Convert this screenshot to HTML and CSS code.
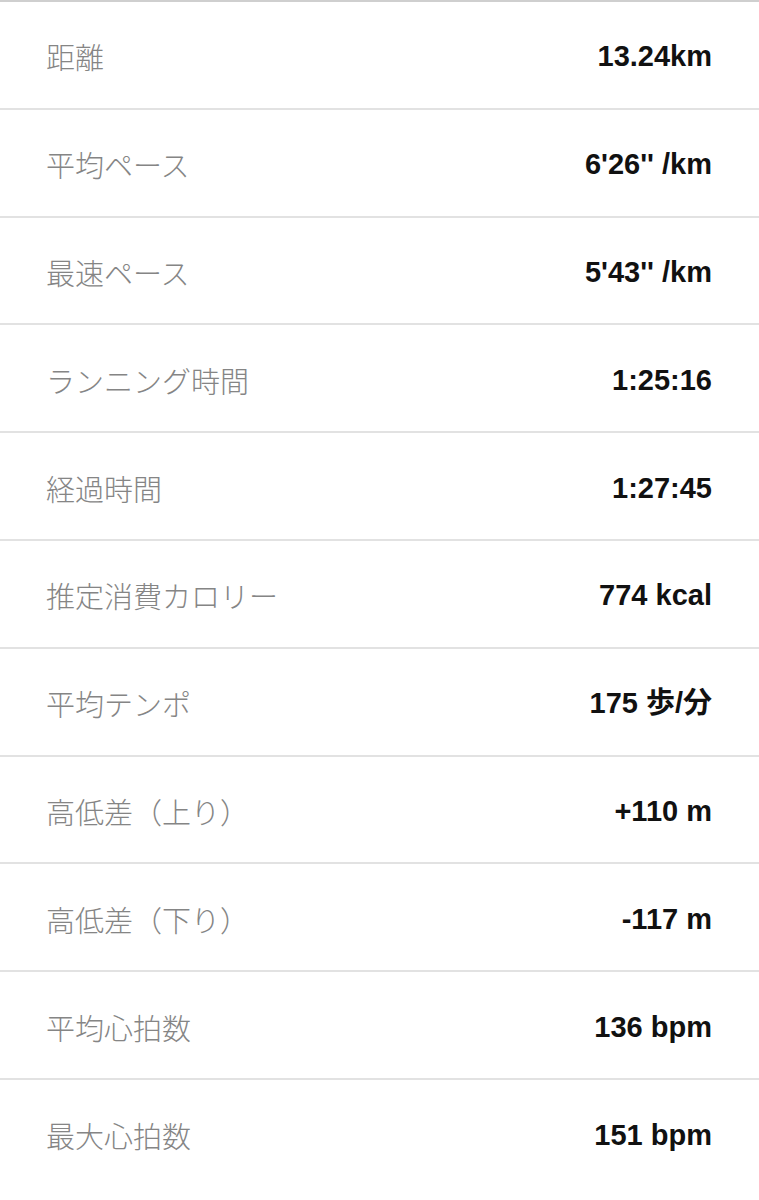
FILE: index.html
```html
<!DOCTYPE html>
<html lang="ja">
<head>
<meta charset="utf-8">
<link rel="stylesheet" href="styles.css">
</head>
<body>
<div class="list">
  <div class="row"><span class="label">距離</span><span class="value">13.24km</span></div>
  <div class="row"><span class="label">平均ペース</span><span class="value">6'26'' /km</span></div>
  <div class="row"><span class="label">最速ペース</span><span class="value">5'43'' /km</span></div>
  <div class="row"><span class="label">ランニング時間</span><span class="value">1:25:16</span></div>
  <div class="row"><span class="label">経過時間</span><span class="value">1:27:45</span></div>
  <div class="row"><span class="label">推定消費カロリー</span><span class="value">774 kcal</span></div>
  <div class="row"><span class="label">平均テンポ</span><span class="value">175 歩/分</span></div>
  <div class="row"><span class="label">高低差（上り）</span><span class="value">+110 m</span></div>
  <div class="row"><span class="label">高低差（下り）</span><span class="value">-117 m</span></div>
  <div class="row"><span class="label">平均心拍数</span><span class="value">136 bpm</span></div>
  <div class="row"><span class="label">最大心拍数</span><span class="value">151 bpm</span></div>
</div>
</body>
</html>
```
FILE: styles.css
```css
html, body {
  margin: 0;
  padding: 0;
  background: #ffffff;
}
.list {
  display: flex;
  flex-direction: column;
  border-top: 2px solid #cfcfcf;
}
.row {
  box-sizing: border-box;
  height: 107.8px;
  display: flex;
  align-items: center;
  justify-content: space-between;
  padding: 4px 47px 0 46px;
  border-bottom: 2px solid #e2e2e2;
}
.row:last-child {
  border-bottom: none;
}
.label {
  font-family: "Noto Sans CJK JP", sans-serif;
  font-weight: 300;
  font-size: 29px;
  color: #858585;
  line-height: 1;
}
.value {
  font-family: "Liberation Sans", "Noto Sans CJK JP", sans-serif;
  font-weight: 700;
  font-size: 29px;
  color: #111111;
  line-height: 1;
}
```
